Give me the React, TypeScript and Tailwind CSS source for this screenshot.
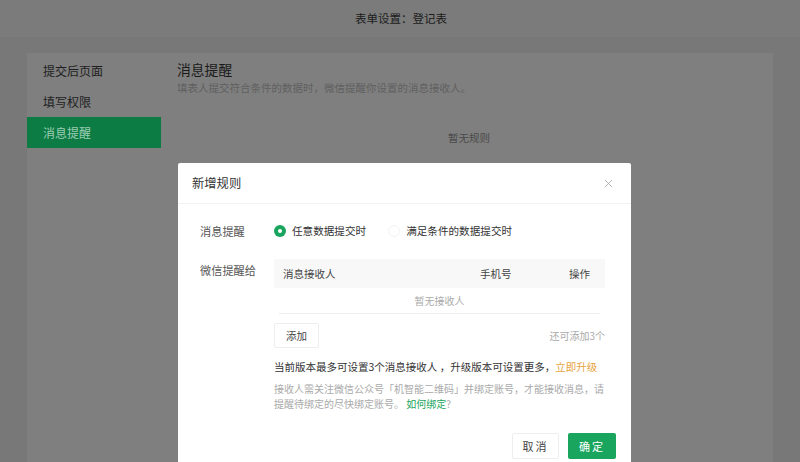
import { X } from "lucide-react";

const font = { fontFamily: '"Noto Sans CJK SC", "Noto Sans", sans-serif' };

const menu = [
  { label: "提交后页面", active: false },
  { label: "填写权限", active: false },
  { label: "消息提醒", active: true },
];

function Radio({ checked, label }: { checked?: boolean; label: string }) {
  return (
    <label className="flex items-center gap-[6px] text-[10.6px] text-[#333]">
      {checked ? (
        <span className="flex h-[12px] w-[12px] items-center justify-center rounded-full bg-[#19a55d]">
          <span className="h-[4px] w-[4px] rounded-full bg-white" />
        </span>
      ) : (
        <span className="h-[12px] w-[12px] rounded-full border border-[#f3f3f3] bg-white" />
      )}
      {label}
    </label>
  );
}

export default function App() {
  return (
    <div className="relative h-[462px] w-[800px] overflow-hidden bg-[#787878]" style={font}>
      {/* page underneath (already dimmed by the mask) */}
      <header className="flex h-[37px] items-center justify-center bg-[#7b7b7b] pl-[2px] text-[11.5px] text-[#1c1c1c]">
        表单设置：登记表
      </header>

      <div className="mx-[27px] mt-[16px] flex h-[420px] bg-[#7f7f7f] pt-[2px]">
        <nav className="flex w-[134px] flex-col">
          {menu.map((m) => (
            <div
              key={m.label}
              className={
                m.active
                  ? "flex h-[31px] items-center bg-[#0c7c44] pl-[16px] text-[12px] text-[#9ccdb3]"
                  : "flex h-[31px] items-center pl-[16px] text-[12px] text-[#1e1e1e]"
              }
            >
              {m.label}
            </div>
          ))}
        </nav>
        <section className="flex-1 pl-[16px] pt-[4px]">
          <h2 className="text-[13.8px] leading-[20px] text-[#1a1a1a]">消息提醒</h2>
          <p className="mt-[1px] text-[10.5px] text-[#606060]">填表人提交符合条件的数据时，微信提醒你设置的消息接收人。</p>
          <p className="mt-[34px] pl-[271px] text-[10.5px] text-[#4a4a4a]">暂无规则</p>
        </section>
      </div>

      {/* modal */}
      <div className="absolute left-[178px] top-[163px] w-[453px] rounded-[2px] bg-white">
        <div className="flex h-[41px] items-center justify-between border-b border-[#f2f2f2] pl-[14px] pr-[16px]">
          <span className="text-[12.3px] text-[#333]">新增规则</span>
          <X className="h-[13px] w-[13px] text-[#999]" strokeWidth={1.3} />
        </div>

        <div className="pl-[22px] pr-[26px] pt-[17px]">
          <div className="flex h-[20px] items-center">
            <span className="w-[74px] text-[11.2px] text-[#555]">消息提醒</span>
            <div className="flex items-center gap-[22px]">
              <Radio checked label="任意数据提交时" />
              <Radio label="满足条件的数据提交时" />
            </div>
          </div>

          <div className="mt-[18px] flex">
            <span className="w-[74px] pt-[3px] text-[11.2px] text-[#555]">微信提醒给</span>
            <div className="flex-1">
              <div className="flex h-[29px] items-center bg-[#f8f8f8] pl-[9px] text-[10.5px] text-[#444]">
                <span className="w-[197px]">消息接收人</span>
                <span className="w-[89px]">手机号</span>
                <span>操作</span>
              </div>
              <div className="mx-[5px] flex h-[26px] items-center justify-center border-b border-[#eeeeee] text-[10px] text-[#aaa]">
                暂无接收人
              </div>
              <div className="mt-[9px] flex items-center justify-between">
                <button className="h-[25px] w-[45px] rounded-[2px] border border-[#eeeeee] text-[10.5px] text-[#444]">
                  添加
                </button>
                <span className="text-[10px] text-[#aaa]">还可添加3个</span>
              </div>
            </div>
          </div>

          <div className="ml-[74px] mt-[11px] whitespace-nowrap text-[10.5px] leading-[16px] text-[#333]">
            当前版本最多可设置3个消息接收人 ，升级版本可设置更多，<span className="text-[#e6a23c]">立即升级</span>
          </div>
          <p className="ml-[74px] mt-[6px] w-[333px] text-[10px] leading-[15px] text-[#aaa]">
            接收人需关注微信公众号「机智能二维码」并绑定账号，才能接收消息，请提醒待绑定的尽快绑定账号。 <span className="text-[#19a55d]">如何绑定</span>?
          </p>
        </div>

        <div className="flex justify-end gap-[9px] pb-[14px] pr-[15px] pt-[22px]">
          <button className="h-[26px] w-[47px] rounded-[2px] border border-[#eeeeee] text-[11px] tracking-[2px] text-[#444]">
            取消
          </button>
          <button className="h-[26px] w-[48px] rounded-[2px] bg-[#19a55d] text-[11px] tracking-[2px] text-white">
            确定
          </button>
        </div>
      </div>
    </div>
  );
}
